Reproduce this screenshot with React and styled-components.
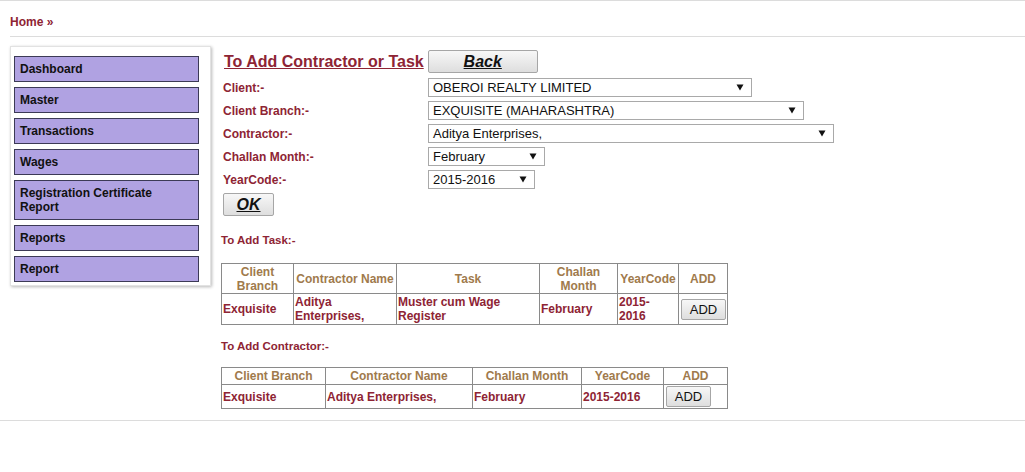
import React from "react";
import styled, { createGlobalStyle } from "styled-components";

const MENU = [
  "Dashboard",
  "Master",
  "Transactions",
  "Wages",
  "Registration Certificate Report",
  "Reports",
  "Report",
];

const FIELDS = [
  { label: "Client:-", value: "OBEROI REALTY LIMITED", width: 324 },
  { label: "Client Branch:-", value: "EXQUISITE (MAHARASHTRA)", width: 376 },
  { label: "Contractor:-", value: "Aditya Enterprises,", width: 406 },
  { label: "Challan Month:-", value: "February", width: 117 },
  { label: "YearCode:-", value: "2015-2016", width: 107 },
];

export default function App() {
  return (
    <Page>
      <GlobalStyle />
      <Breadcrumb>Home »</Breadcrumb>
      <Main>
        <SidePanel>
          {MENU.map((m) => (
            <MenuItem key={m}>{m}</MenuItem>
          ))}
        </SidePanel>
        <Content>
          <TitleRow>
            <Title>To Add Contractor or Task</Title>
            <PlainButton $w={110}>Back</PlainButton>
          </TitleRow>
          <Form>
            {FIELDS.map((f) => (
              <React.Fragment key={f.label}>
                <Label>{f.label}</Label>
                <SelectBox $w={f.width}>
                  <span>{f.value}</span>
                  <Arrow />
                </SelectBox>
              </React.Fragment>
            ))}
          </Form>
          <OkWrap>
            <PlainButton $w={51}>OK</PlainButton>
          </OkWrap>

          <SectionLabel $top={17} $bottom={16}>To Add Task:-</SectionLabel>
          <Grid $w={506}>
            <colgroup>
              <Col $w={72} />
              <Col $w={103} />
              <Col $w={143} />
              <Col $w={78} />
              <Col $w={61} />
              <Col $w={49} />
            </colgroup>
            <thead>
              <tr>
                <Th $h={29}>Client Branch</Th>
                <Th $h={29}>Contractor Name</Th>
                <Th $h={29}>Task</Th>
                <Th $h={29}>Challan Month</Th>
                <Th $h={29}>YearCode</Th>
                <Th $h={29}>ADD</Th>
              </tr>
            </thead>
            <tbody>
              <tr>
                <Td $h={30}>Exquisite</Td>
                <Td $h={30}>Aditya Enterprises,</Td>
                <Td $h={30}>Muster cum Wage Register</Td>
                <Td $h={30}>February</Td>
                <Td $h={30} $pr={4}>2015-2016</Td>
                <Td $h={30}>
                  <AddButton>ADD</AddButton>
                </Td>
              </tr>
            </tbody>
          </Grid>

          <SectionLabel $top={14} $bottom={14}>To Add Contractor:-</SectionLabel>
          <Grid $w={506}>
            <colgroup>
              <Col $w={104} />
              <Col $w={147} />
              <Col $w={109} />
              <Col $w={82} />
              <Col $w={64} />
            </colgroup>
            <thead>
              <tr>
                <Th $h={16}>Client Branch</Th>
                <Th $h={16}>Contractor Name</Th>
                <Th $h={16}>Challan Month</Th>
                <Th $h={16}>YearCode</Th>
                <Th $h={16}>ADD</Th>
              </tr>
            </thead>
            <tbody>
              <tr>
                <Td $h={23}>Exquisite</Td>
                <Td $h={23}>Aditya Enterprises,</Td>
                <Td $h={23}>February</Td>
                <Td $h={23}>2015-2016</Td>
                <Td $h={23}>
                  <AddButton>ADD</AddButton>
                </Td>
              </tr>
            </tbody>
          </Grid>
        </Content>
      </Main>
      <BottomRule />
    </Page>
  );
}

function Arrow() {
  return (
    <ArrowSvg width="8" height="7" viewBox="0 0 8 7">
      <path d="M0.5 0.5 L7.5 0.5 L4 6.5 Z" fill="#111" />
    </ArrowSvg>
  );
}

const GlobalStyle = createGlobalStyle`
  body {
    margin: 0;
    background: #fff;
    font-family: "Liberation Sans", Arial, sans-serif;
  }
`;

const Page = styled.div`
  border-top: 1px solid #dcdcdc;
`;

const Breadcrumb = styled.div`
  margin-left: 10px;
  padding: 14px 0 7px;
  border-bottom: 1px solid #dcdcdc;
  font-size: 12px;
  line-height: 14px;
  font-weight: bold;
  color: #8e2434;
`;

const Main = styled.div`
  display: flex;
  align-items: flex-start;
  margin-top: 9px;
`;

const SidePanel = styled.div`
  width: 185px;
  margin-left: 10px;
  padding: 4px 11px 3px 3px;
  border: 1px solid #e2e2e2;
  box-shadow: 1px 1px 3px rgba(0, 0, 0, 0.28);
  background: #fff;
  display: flex;
  flex-direction: column;
`;

const MenuItem = styled.div`
  margin-top: 5px;
  width: 168px;
  padding: 5px 10px 5px 5px;
  border: 1px solid #3c3a56;
  background: #b0a2e2;
  color: #111;
  font-size: 12px;
  line-height: 14px;
  font-weight: bold;
`;

const Content = styled.div`
  margin-left: 10px;
  display: flex;
  flex-direction: column;
  align-items: flex-start;
`;

const TitleRow = styled.div`
  display: flex;
  align-items: center;
  margin-top: 4px;
`;

const Title = styled.div`
  margin-left: 3px;
  margin-right: 4px;
  font-size: 16px;
  font-weight: bold;
  color: #8e2434;
  text-decoration: underline;
  line-height: 18px;
`;

const PlainButton = styled.button`
  width: ${(p) => p.$w}px;
  height: 23px;
  padding: 0;
  border: 1px solid #a6a6a6;
  border-radius: 2px;
  background: linear-gradient(#f7f7f7, #dedede);
  font-family: "Liberation Sans", Arial, sans-serif;
  font-size: 16px;
  font-weight: bold;
  font-style: italic;
  text-decoration: underline;
  color: #111;
`;

const Form = styled.div`
  display: grid;
  grid-template-columns: 207px auto;
  grid-auto-rows: 23px;
  align-items: center;
  margin-top: 3px;
`;

const Label = styled.div`
  padding-left: 2px;
  font-size: 12px;
  font-weight: bold;
  color: #8e2434;
`;

const SelectBox = styled.div`
  width: ${(p) => p.$w}px;
  height: 19px;
  box-sizing: border-box;
  border: 1px solid #a9a9a9;
  background: #fff;
  display: flex;
  align-items: center;
  justify-content: space-between;
  padding: 0 7px 0 4px;
  font-size: 13px;
  color: #111;
`;

const ArrowSvg = styled.svg`
  display: block;
`;

const OkWrap = styled.div`
  margin: 2px 0 0 2px;
`;

const SectionLabel = styled.div`
  margin-top: ${(p) => p.$top}px;
  margin-bottom: ${(p) => p.$bottom}px;
  font-size: 11.5px;
  line-height: 14px;
  font-weight: bold;
  color: #8e2434;
`;

const Grid = styled.table`
  width: ${(p) => p.$w}px;
  table-layout: fixed;
  border-collapse: collapse;
  border: 1px solid #8a8a8a;
`;

const Col = styled.col`
  width: ${(p) => p.$w}px;
`;

const Th = styled.th`
  height: ${(p) => p.$h}px;
  padding: 0 1px;
  border: 1px solid #8a8a8a;
  font-size: 12px;
  line-height: 14px;
  font-weight: bold;
  color: #a07a4c;
  text-align: center;
  vertical-align: middle;
`;

const Td = styled.td`
  height: ${(p) => p.$h}px;
  padding: 0 ${(p) => p.$pr || 1}px 0 1px;
  border: 1px solid #8a8a8a;
  font-size: 12px;
  line-height: 14px;
  font-weight: bold;
  color: #8e2434;
  text-align: left;
  vertical-align: middle;
`;

const AddButton = styled.button`
  width: 45px;
  height: 21px;
  padding: 0;
  margin-left: 1px;
  border: 1px solid #a6a6a6;
  border-radius: 2px;
  background: linear-gradient(#f7f7f7, #dedede);
  font-family: "Liberation Sans", Arial, sans-serif;
  font-size: 13px;
  color: #111;
`;

const BottomRule = styled.div`
  margin-top: 11px;
  border-top: 1px solid #dcdcdc;
`;
